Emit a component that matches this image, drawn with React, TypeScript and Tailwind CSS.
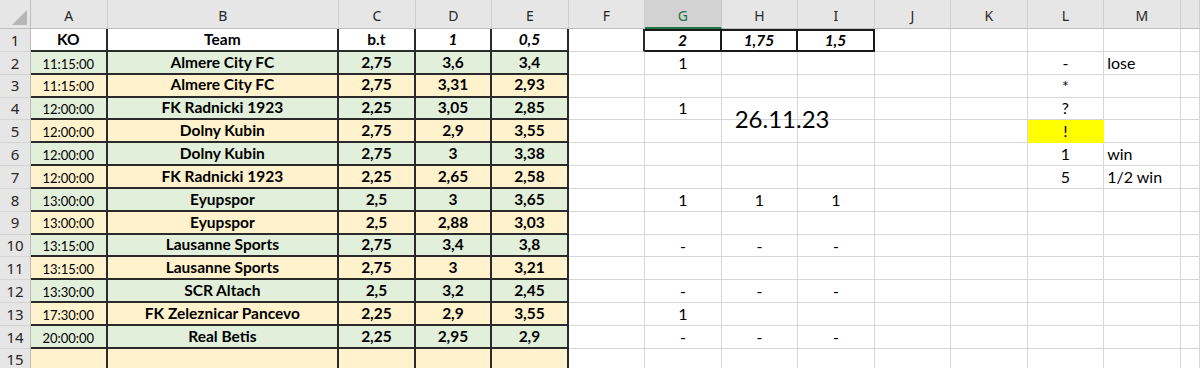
import React from "react";

const cols = ["A", "B", "C", "D", "E", "F", "G", "H", "I", "J", "K", "L", "M", ""];

const data: string[][] = [
  ["11:15:00", "Almere City FC", "2,75", "3,6", "3,4"],
  ["11:15:00", "Almere City FC", "2,75", "3,31", "2,93"],
  ["12:00:00", "FK Radnicki 1923", "2,25", "3,05", "2,85"],
  ["12:00:00", "Dolny Kubin", "2,75", "2,9", "3,55"],
  ["12:00:00", "Dolny Kubin", "2,75", "3", "3,38"],
  ["12:00:00", "FK Radnicki 1923", "2,25", "2,65", "2,58"],
  ["13:00:00", "Eyupspor", "2,5", "3", "3,65"],
  ["13:00:00", "Eyupspor", "2,5", "2,88", "3,03"],
  ["13:15:00", "Lausanne Sports", "2,75", "3,4", "3,8"],
  ["13:15:00", "Lausanne Sports", "2,75", "3", "3,21"],
  ["13:30:00", "SCR Altach", "2,5", "3,2", "2,45"],
  ["17:30:00", "FK Zeleznicar Pancevo", "2,25", "2,9", "3,55"],
  ["20:00:00", "Real Betis", "2,25", "2,95", "2,9"],
  ["", "", "", "", ""],
];

const ghi: Record<number, string[]> = {
  2: ["1", "", ""],
  4: ["1", "", ""],
  8: ["1", "1", "1"],
  10: ["-", "-", "-"],
  12: ["-", "-", "-"],
  13: ["1", "", ""],
  14: ["-", "-", "-"],
};

const lcol: Record<number, string> = { 2: "-", 3: "*", 4: "?", 5: "!", 6: "1", 7: "5" };
const mcol: Record<number, string> = { 2: "lose", 6: "win", 7: "1/2 win" };

function ColHeader({ label }: { label: string }) {
  const sel = label === "G";
  return (
    <div
      className={
        "flex items-center justify-center pt-[3px] border-r border-b text-[14px] " +
        (sel
          ? "bg-[#d2d2d2] text-[#217346] border-r-[#c6c6c6] border-b-2 border-b-[#217346]"
          : "bg-[#e6e6e6] text-[#262626] border-r-[#cfcfcf] border-b-[#bdbdbd]")
      }
      style={{ fontFamily: "'Noto Sans', 'Open Sans', sans-serif" }}
    >
      {label}
    </div>
  );
}

function RowHeader({ n }: { n: number }) {
  return (
    <div
      className="flex items-center justify-center bg-[#e6e6e6] border-r border-r-[#bdbdbd] border-b border-b-[#d4d4d4] text-[15px] text-[#262626]"
      style={{ fontFamily: "'Noto Sans', 'Open Sans', sans-serif" }}
    >
      {n}
    </div>
  );
}

export default function App() {
  const rows: React.ReactNode[] = [];

  rows.push(
    <div
      key="corner"
      className="relative bg-[#e6e6e6] border-r border-r-[#bdbdbd] border-b border-b-[#bdbdbd]"
    >
      <svg className="absolute right-[3px] bottom-[3px]" width="15" height="15" viewBox="0 0 15 15">
        <polygon points="15,0 15,15 0,15" fill="#b5b5b5" />
      </svg>
    </div>
  );
  cols.forEach((c, i) => rows.push(<ColHeader key={"h" + i} label={c} />));

  for (let r = 1; r <= 15; r++) {
    rows.push(<RowHeader key={"rh" + r} n={r} />);
    const fill =
      r === 1 ? "bg-white" : r % 2 === 0 ? "bg-[#e2efda]" : "bg-[#fff2cc]";
    const dataBorder = "border-r-2 border-b-2 border-[#2a2a2a]";
    const grid = "border-r border-b border-[#d6d6d6]";

    for (let c = 0; c < 5; c++) {
      let content: React.ReactNode = null;
      let cls = "";
      if (r === 1) {
        const hdr = ["KO", "Team", "b.t", "1", "0,5"][c];
        content = hdr;
        cls = "font-bold text-[15.5px] " + (c >= 3 ? "italic" : "");
      } else {
        const v = data[r - 2][c];
        content = v;
        cls = c === 0 ? "text-[13px] pt-[4px] text-[#111]" : "font-bold text-[15.5px]";
      }
      rows.push(
        <div
          key={`d${r}-${c}`}
          className={`flex items-center justify-center whitespace-nowrap overflow-hidden text-black ${fill} ${dataBorder} ${cls}`}
        >
          {content}
        </div>
      );
    }

    rows.push(
      <div
        key={`f${r}`}
        className={r === 1 ? "border-r-2 border-r-[#2a2a2a] border-b border-b-[#d6d6d6]" : grid}
      />
    );

    for (let c = 0; c < 3; c++) {
      let content: React.ReactNode = null;
      if (r === 1) content = ["2", "1,75", "1,5"][c];
      else if (ghi[r]) content = ghi[r][c];
      const cls =
        r === 1
          ? "border-t-2 border-r-2 border-b-2 border-[#1a1a1a] font-bold italic text-[15.5px]"
          : grid + " text-[16px]";
      rows.push(
        <div
          key={`g${r}-${c}`}
          className={`relative flex items-center justify-center whitespace-nowrap text-black ${cls}`}
        >
          {content}
          {r === 4 && c === 1 && (
            <span className="absolute left-[13px] top-[9px] z-10 text-[24px] leading-[24px] text-black">
              26.11.23
            </span>
          )}
        </div>
      );
    }

    rows.push(<div key={`j${r}`} className={grid} />);
    rows.push(<div key={`k${r}`} className={grid} />);

    rows.push(
      <div
        key={`l${r}`}
        className={
          "flex items-center justify-center text-[16px] text-black " +
          (r === 5 ? "bg-[#ffff00] border-r border-b border-[#ffff00]" : grid)
        }
      >
        {lcol[r] ?? ""}
      </div>
    );
    rows.push(
      <div key={`m${r}`} className={`flex items-center pl-[3px] text-[16px] text-black whitespace-nowrap ${grid}`}>
        {mcol[r] ?? ""}
      </div>
    );
    rows.push(<div key={`n${r}`} className={grid} />);
  }

  return (
    <div
      className="w-[1200px] h-[368px] overflow-hidden bg-white"
      style={{ fontFamily: "Lato, 'Liberation Sans', sans-serif" }}
    >
      <div className="grid grid-cols-[31px_76.5px_231.7px_repeat(11,76.5px)_1fr] grid-rows-[29px_repeat(15,22.85px)]">
        {rows}
      </div>
    </div>
  );
}
